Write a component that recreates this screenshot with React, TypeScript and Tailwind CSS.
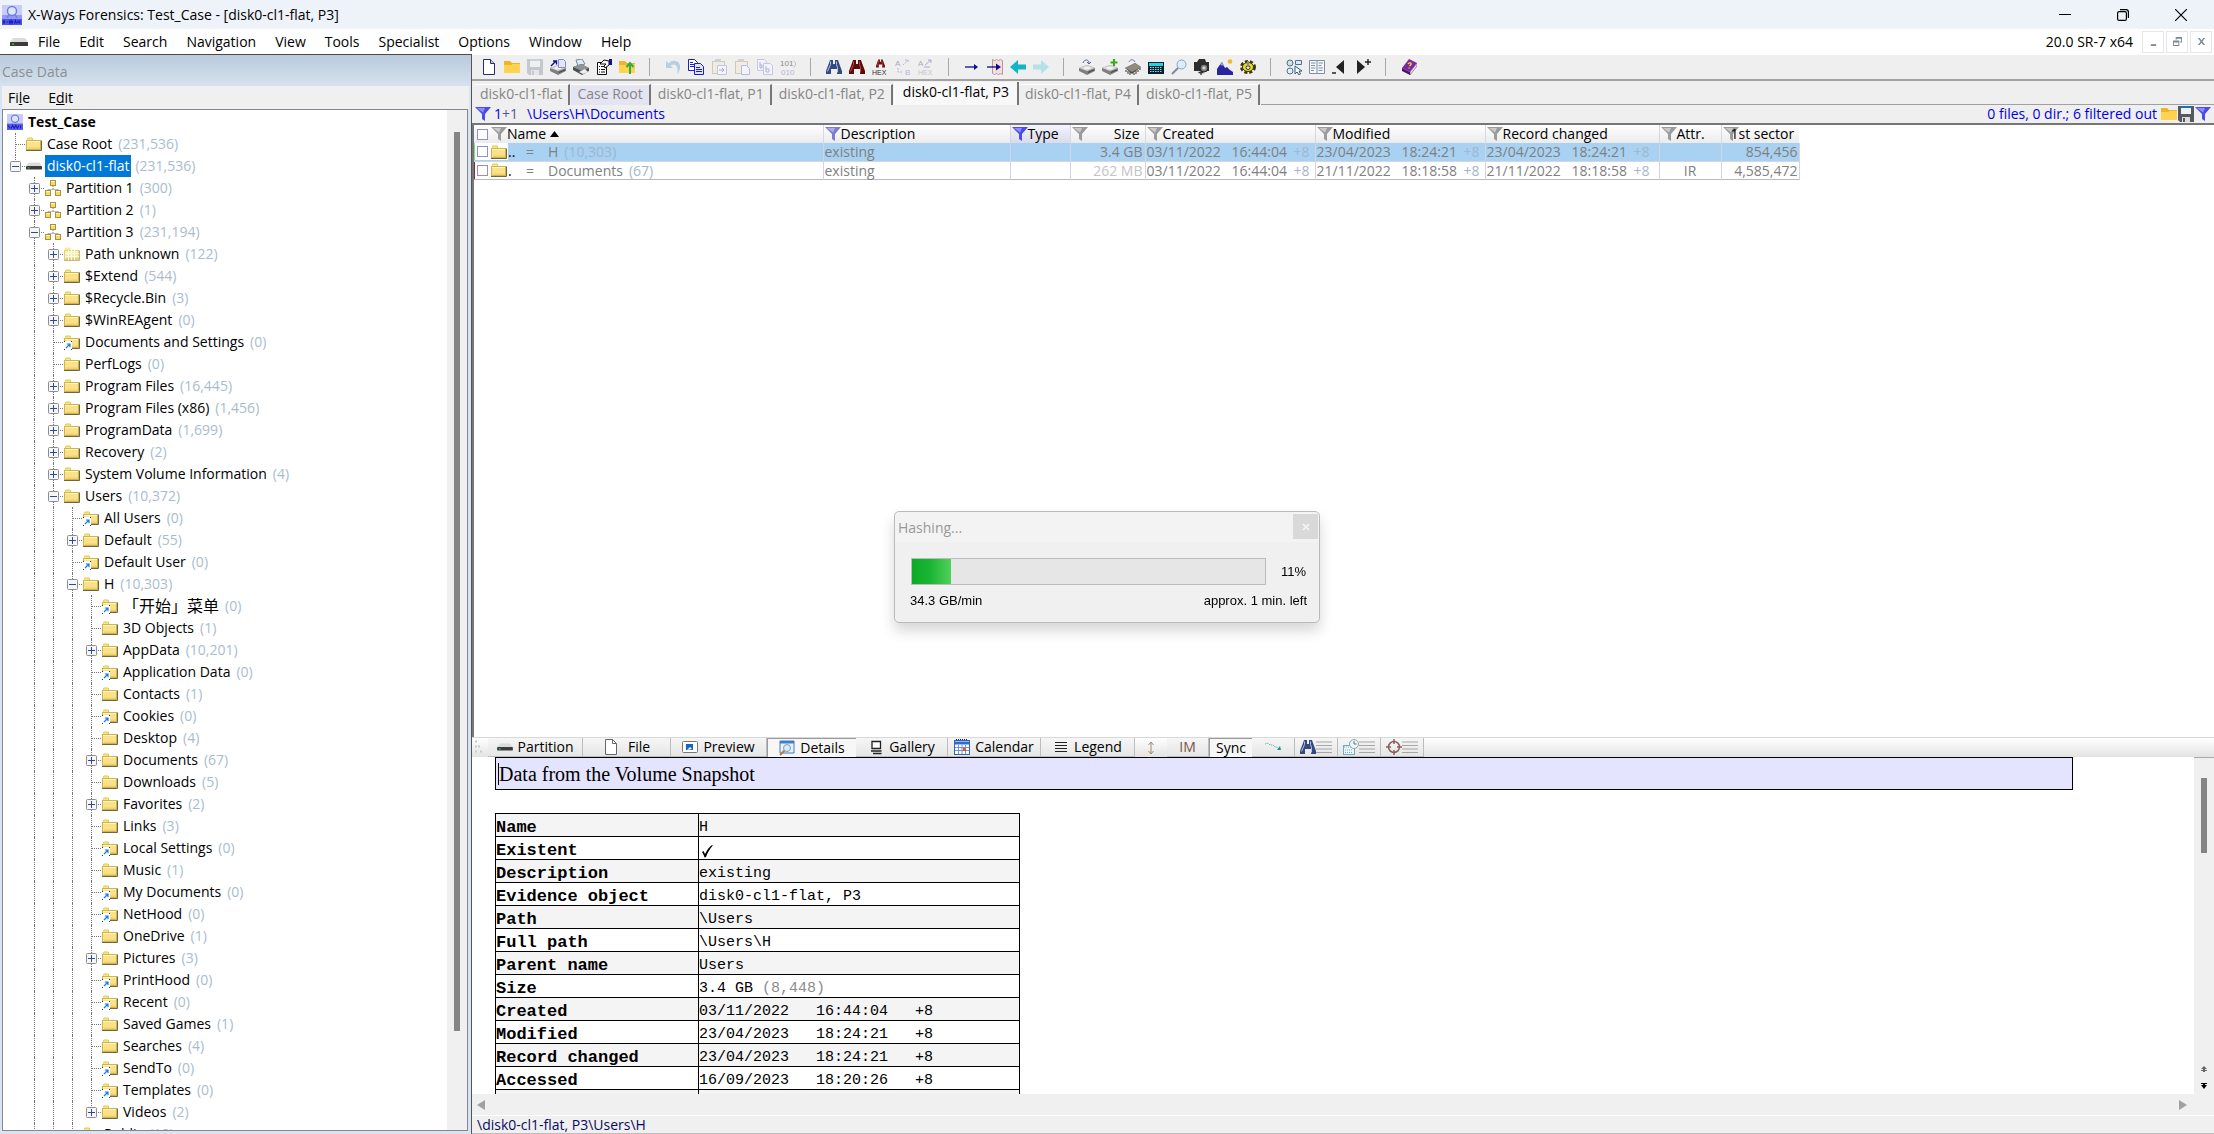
import { type ReactNode } from 'react';

type NodeKind = 'case' | 'folder' | 'link' | 'disk' | 'partition' | 'ghost';

interface TreeNode {
  depth: number;
  label: string;
  count?: string;
  kind: NodeKind;
  toggle?: '+' | '-';
  last?: boolean;
  cjk?: boolean;
}

const TREE: TreeNode[] = [
  { depth: 0, label: 'Test_Case', kind: 'case' },
  { depth: 1, label: 'Case Root', count: '231,536', kind: 'folder' },
  { depth: 1, label: 'disk0-cl1-flat', count: '231,536', kind: 'disk', toggle: '-', last: true },
  { depth: 2, label: 'Partition 1', count: '300', kind: 'partition', toggle: '+' },
  { depth: 2, label: 'Partition 2', count: '1', kind: 'partition', toggle: '+' },
  { depth: 2, label: 'Partition 3', count: '231,194', kind: 'partition', toggle: '-' },
  { depth: 3, label: 'Path unknown', count: '122', kind: 'ghost', toggle: '+' },
  { depth: 3, label: '$Extend', count: '544', kind: 'folder', toggle: '+' },
  { depth: 3, label: '$Recycle.Bin', count: '3', kind: 'folder', toggle: '+' },
  { depth: 3, label: '$WinREAgent', count: '0', kind: 'folder', toggle: '+' },
  { depth: 3, label: 'Documents and Settings', count: '0', kind: 'link' },
  { depth: 3, label: 'PerfLogs', count: '0', kind: 'folder' },
  { depth: 3, label: 'Program Files', count: '16,445', kind: 'folder', toggle: '+' },
  { depth: 3, label: 'Program Files (x86)', count: '1,456', kind: 'folder', toggle: '+' },
  { depth: 3, label: 'ProgramData', count: '1,699', kind: 'folder', toggle: '+' },
  { depth: 3, label: 'Recovery', count: '2', kind: 'folder', toggle: '+' },
  { depth: 3, label: 'System Volume Information', count: '4', kind: 'folder', toggle: '+' },
  { depth: 3, label: 'Users', count: '10,372', kind: 'folder', toggle: '-' },
  { depth: 4, label: 'All Users', count: '0', kind: 'link' },
  { depth: 4, label: 'Default', count: '55', kind: 'folder', toggle: '+' },
  { depth: 4, label: 'Default User', count: '0', kind: 'link' },
  { depth: 4, label: 'H', count: '10,303', kind: 'folder', toggle: '-' },
  { depth: 5, label: '「开始」菜单', count: '0', kind: 'link', cjk: true },
  { depth: 5, label: '3D Objects', count: '1', kind: 'folder' },
  { depth: 5, label: 'AppData', count: '10,201', kind: 'folder', toggle: '+' },
  { depth: 5, label: 'Application Data', count: '0', kind: 'link' },
  { depth: 5, label: 'Contacts', count: '1', kind: 'folder' },
  { depth: 5, label: 'Cookies', count: '0', kind: 'link' },
  { depth: 5, label: 'Desktop', count: '4', kind: 'folder' },
  { depth: 5, label: 'Documents', count: '67', kind: 'folder', toggle: '+' },
  { depth: 5, label: 'Downloads', count: '5', kind: 'folder' },
  { depth: 5, label: 'Favorites', count: '2', kind: 'folder', toggle: '+' },
  { depth: 5, label: 'Links', count: '3', kind: 'folder' },
  { depth: 5, label: 'Local Settings', count: '0', kind: 'link' },
  { depth: 5, label: 'Music', count: '1', kind: 'folder' },
  { depth: 5, label: 'My Documents', count: '0', kind: 'link' },
  { depth: 5, label: 'NetHood', count: '0', kind: 'link' },
  { depth: 5, label: 'OneDrive', count: '1', kind: 'folder' },
  { depth: 5, label: 'Pictures', count: '3', kind: 'folder', toggle: '+' },
  { depth: 5, label: 'PrintHood', count: '0', kind: 'link' },
  { depth: 5, label: 'Recent', count: '0', kind: 'link' },
  { depth: 5, label: 'Saved Games', count: '1', kind: 'folder' },
  { depth: 5, label: 'Searches', count: '4', kind: 'folder' },
  { depth: 5, label: 'SendTo', count: '0', kind: 'link' },
  { depth: 5, label: 'Templates', count: '0', kind: 'link' },
  { depth: 5, label: 'Videos', count: '2', kind: 'folder', toggle: '+', last: true },
  { depth: 4, label: 'Public', count: '18', kind: 'folder' },
];

const MENU = ['File', 'Edit', 'Search', 'Navigation', 'View', 'Tools', 'Specialist', 'Options', 'Window', 'Help'];

const DETAILS: { name: string; value: ReactNode }[] = [
  { name: 'Name', value: 'H' },
  {
    name: 'Existent',
    value: (
      <svg viewBox="0 0 14 14" className="ml-0.5 block size-[14px]" role="img" aria-label="yes">
        <path d="M1 8l1.500-1 1.500 3C6 6 8 3 11 1l.8.400C8.500 5 6.500 9 5 13l-1.500.500C3 11.500 2 9.500 1 8z" fill="#000" />
      </svg>
    ),
  },
  { name: 'Description', value: 'existing' },
  { name: 'Evidence object', value: 'disk0-cl1-flat, P3' },
  { name: 'Path', value: '\\Users' },
  { name: 'Full path', value: '\\Users\\H' },
  { name: 'Parent name', value: 'Users' },
  { name: 'Size', value: <>3.4 GB <span className="text-[#8c8c8c]">(8,448)</span></> },
  { name: 'Created', value: '03/11/2022   16:44:04   +8' },
  { name: 'Modified', value: '23/04/2023   18:24:21   +8' },
  { name: 'Record changed', value: '23/04/2023   18:24:21   +8' },
  { name: 'Accessed', value: '16/09/2023   18:20:26   +8' },
  { name: '', value: '' },
];

function Svg({ children, className = 'size-4' }: { children: ReactNode; className?: string }) {
  return (
    <svg viewBox="0 0 16 16" className={`${className} shrink-0`} aria-hidden="true">
      {children}
    </svg>
  );
}

/* ---------- shared drawings ---------- */

function Logo() {
  return (
    <svg viewBox="0 0 20 20" className="size-5 shrink-0" aria-hidden="true">
      <rect width="20" height="20" fill="#c9cdfb" />
      <rect y="10" width="20" height="4" fill="#9499f5" />
      <rect y="14" width="20" height="6" fill="#5055ee" />
      <circle cx="10" cy="6" r="4.500" fill="#dfe4ff" stroke="#6f7fe0" strokeWidth="1.400" />
      <path d="M7 9.500L5 12.500M13 9.500l2 3" stroke="#6f7fe0" strokeWidth="1.400" />
      <path d="M1 15.500l2 3M3 15.500l-2 3M4.500 17h1.500M7 15.500l1 3 1-3 1 3 1-3M12.500 18.500l1-3 1 3M16 15.500v3M18.500 15.500l-1.500 1.500 1.500 1.500" stroke="#1a1fb0" strokeWidth="1.100" fill="none" />
    </svg>
  );
}

function FolderIcon({ link = false, ghost = false }: { link?: boolean; ghost?: boolean }) {
  return (
    <Svg>
      <path d="M0 4h1V2.500L2 1.500h4l1 1V4h8v10H0z" fill={ghost ? '#f6eeb4' : '#d9c95a'} />
      <path d="M2 2.500h4V4H1z" fill="#fbe97a" />
      <rect x="0.500" y="4.500" width="14" height="9" fill={ghost ? '#f7edab' : '#fbe28a'} stroke={ghost ? '#dccf80' : '#c9b64e'} />
      <path d="M1 5.500h13" stroke="#fff7bd" />
      <path d="M2 11.500h12v1.500H2z" fill="#f4cf74" />
      <path d="M0 14.500h15.500V4.500" stroke={ghost ? '#c5bb80' : '#6f6742'} fill="none" />
      {ghost && <path d="M4.500 4v10M7.500 4v10M10.500 4v10M1 7.500h14M1 10.500h14" stroke="#fffdf0" />}
      {link && (
        <>
          <rect x="0" y="7" width="8" height="9" fill="#fff" />
          <path d="M0 7.500h1M7 7.500h1M0 15.500h1M7 15.500h1" stroke="#333" />
          <path d="M2 14l3.500-3.500M2.800 10H6v3.200" stroke="#1580d8" strokeWidth="1.200" fill="none" />
        </>
      )}
    </Svg>
  );
}

function DiskIcon({ className = 'w-4 h-4' }: { className?: string }) {
  return (
    <svg viewBox="0 0 18 16" className={`${className} shrink-0`} aria-hidden="true">
      <path d="M3 4h12l3 4H0z" fill="#dcdcdc" />
      <rect y="8" width="18" height="4" rx="0.500" fill="#3c3c3c" />
      <rect x="2" y="9.500" width="2" height="1.200" fill="#39d24a" />
    </svg>
  );
}

function PartitionIcon() {
  return (
    <Svg>
      <path d="M8 6v3M3 12V9.500h10V12" stroke="#777" strokeDasharray="1 1" fill="none" />
      {[[5, 0], [0, 10], [10, 10]].map(([x, y]) => (
        <g key={`${x}-${y}`}>
          <rect x={x + 0.5} y={y + 0.5} width="5" height="5" fill="#fbd960" stroke="#a8943a" />
          <path d={`M${x + 1} ${y + 1.5}h4`} stroke="#fff6be" />
        </g>
      ))}
    </Svg>
  );
}

function FilterIcon({ tone = 'gray' }: { tone?: 'gray' | 'blue' | 'lilac' }) {
  const fill = { gray: '#9b9b9b', blue: '#4b4bf2', lilac: '#7d7dd0' }[tone];
  const light = { gray: '#c9c9c9', blue: '#8f8ffb', lilac: '#adade6' }[tone];
  return (
    <Svg>
      <path d="M0 1h16L10 8v7L7 13V8z" fill={fill} />
      <path d="M2 2h8L8 6.500z" fill={light} />
    </Svg>
  );
}

function YellowFolder() {
  return (
    <>
      <path d="M0 3V2h6l2 2h8v10H0z" fill="#f0b429" />
      <path d="M0 6h7l2-1h7v9H0z" fill="#ffd24f" />
    </>
  );
}

function Floppy({ body = '#555a60', cap = '#1571c4' }: { body?: string; cap?: string }) {
  return (
    <>
      <path d="M0 0h16v16H2l-2-2z" fill={body} />
      <rect x="3" y="0" width="10" height="8" fill="#f1f1f1" />
      <rect x="3" y="0" width="10" height="2" fill={cap} />
      <rect x="4" y="11" width="8" height="5" fill="#dcdcdc" />
      <rect x="5" y="12" width="2" height="4" fill={body} />
    </>
  );
}

function Binoculars({ fill, shine }: { fill: string; shine: string }) {
  return (
    <>
      <path d="M4 1h3v4h2V1h3l1 3 3 8v3h-5v-5H5v5H0v-3l3-8z" fill={fill} />
      <path d="M4.500 2.500v3l-3 7M10.500 2.500v3l1 3v5" stroke={shine} fill="none" />
    </>
  );
}

function Drive() {
  return (
    <>
      <path d="M0 9l8-3 8 3v3l-8 4-8-4z" fill="#7f7f7f" />
      <path d="M0 9l8-3 8 3-8 3z" fill="#d4d4d4" />
      <path d="M9 13.500l6-2.700" stroke="#444" />
      <ellipse cx="8" cy="9" rx="3.500" ry="1.300" fill="#f3f3f3" />
    </>
  );
}

/* ---------- main toolbar ---------- */

const TOOLS: ([string, ReactNode] | null)[] = [
  ['New', <><path d="M2.500 0.500h7l4 4v11h-11z" fill="#fff" stroke="#2a2a6c" /><path d="M9.500 0.500v4h4" fill="#c9c9ea" stroke="#2a2a6c" /></>],
  ['Open', <YellowFolder />],
  ['Save', <g opacity="0.500"><Floppy body="#9aa3ab" cap="#a5b6c4" /></g>],
  ['Image disk', <><Drive /><path d="M8.500 0.500h5l2 2v6h-7z" fill="#e4e6ff" stroke="#8a8ad0" /><path d="M1 7l5-5M3 2h3.500v3.500" stroke="#10108a" strokeWidth="1.400" fill="none" /></>],
  ['Print', <><path d="M3 1l6-1 3 5-7 2z" fill="#d7eef5" stroke="#7c8a90" /><path d="M0 8l8-3 8 4v3l-7 4-9-5z" fill="#4b4f52" /><path d="M0 8l8-3 8 4-7 3z" fill="#8e9498" /><path d="M6 13l6-3 3 3-5 2z" fill="#eee" /></>],
  ['Properties', <><path d="M1.500 3.500h9v12h-9z" fill="#fff" stroke="#111" /><path d="M3 7.500h1M5 7.500h4M3 10.500h1M5 10.500h4M3 13h1M5 13h4" stroke="#111" /><path d="M4 5l4-4 5 1v4l-4 3-1-2 2-2z" fill="#fff" stroke="#111" /><path d="M13 0h3v6h-3z" fill="#10108a" /></>],
  ['Up', <><YellowFolder /><path d="M11 15V5M7.500 8L11 4l3.500 4" stroke="#2fae46" strokeWidth="2" fill="none" /></>],
  null,
  ['Undo', <path d="M1 2v7h7L5.500 6.500c4-2.500 7 0 7 4.500v4c4-5 3.500-12-2-13-3-.500-5 .500-6.500 2.500z" fill="#b9cfe0" />],
  ['Copy', <><path d="M0.500 0.500h6l3 3v8h-9z" fill="#fff" stroke="#1c1cd0" /><path d="M2 3.500h3M2 5.500h5M2 7.500h4" stroke="#1c1cd0" /><path d="M6.500 4.500h6l3 3v8h-9z" fill="#dfe2ff" stroke="#1c1cd0" /><path d="M8 8.500h4M8 10.500h6M8 12.500h6" stroke="#1c1cd0" /></>],
  ['Paste', <><rect x="1.500" y="2.500" width="12" height="12" fill="#f1ebe2" stroke="#cfc8bd" /><rect x="4" y="0" width="6" height="3" fill="#cfcfda" /><path d="M6.500 6.500h9v9h-9z" fill="#f4f4ff" stroke="#c3c3da" /><path d="M8 11h5M11 9l2 2-2 2" stroke="#a9a9ba" fill="none" /></>],
  ['Paste new', <><rect x="1.500" y="2.500" width="12" height="12" fill="#f1ebe2" stroke="#cfc8bd" /><rect x="4" y="0" width="6" height="3" fill="#cfcfda" /><path d="M7.500 6.500h5l3 3v6h-8z" fill="#f4f4ff" stroke="#b8b8e4" /></>],
  ['Write block', <><path d="M0.500 0.500h7l2 2v9h-9z" fill="#f3f3ff" stroke="#c6c6e2" /><path d="M6.500 4.500h7l2 2v9h-9z" fill="#f3f3ff" stroke="#c6c6e2" /><path d="M3 3v6M3 6h2v3H3M9 7v6M9 10h3v3H9" stroke="#b2b2cf" fill="none" /></>],
  ['Convert', <><text x="0" y="7" fontSize="8" fill="#8c8c8c" fontFamily="Liberation Sans">101</text><text x="1" y="16" fontSize="8" fill="#b4b4d2" fontFamily="Liberation Sans">010</text><path d="M13.500 2c3 1 2.500 5 0 6.500" stroke="#c0c0c0" fill="none" /></>],
  null,
  ['Find text', <Binoculars fill="#36497e" shine="#b4c2ee" />],
  ['Find hex', <Binoculars fill="#5b0b0b" shine="#b94a4a" />],
  ['Find hex values', <><g transform="translate(4 0) scale(.560)"><Binoculars fill="#6d0f0f" shine="#c55" /></g><text x="0" y="16" fontSize="7" fill="#333" fontFamily="Liberation Sans">HEX</text></>],
  ['Replace text', <g opacity="0.600"><text x="0" y="7" fontSize="8" fill="#7b7b95" fontFamily="Liberation Sans">A</text><text x="10" y="16" fontSize="8" fill="#9090d0" fontFamily="Liberation Sans">B</text><path d="M8 6l5-5M10 1h3v3M3 9v4h5" stroke="#8d8dbb" strokeDasharray="2 1" fill="none" /></g>],
  ['Replace hex', <g opacity="0.600"><text x="0" y="7" fontSize="8" fill="#7b7b95" fontFamily="Liberation Sans">A</text><text x="0" y="16" fontSize="7" fill="#aaa" fontFamily="Liberation Sans">HEX</text><path d="M7 6l6-5M10 1h3v3M6 8h6" stroke="#7d7dbb" fill="none" /></g>],
  null,
  ['Go to offset', <><path d="M1 8h10" stroke="#0c0c92" strokeWidth="1.300" /><path d="M10 5l4 3-4 3z" fill="#0c0c92" /></>],
  ['Go to page', <><path d="M5.500 0.500l2 1 2-1 2 1 2-1 2 1v14l-2-1-2 1-2-1-2 1-2-1z" fill="#f7dede" stroke="#b49a9a" /><path d="M0 8h10" stroke="#0c0c92" strokeWidth="1.300" /><path d="M9 4.500l5 3.500-5 3.500z" fill="#0c0c92" /></>],
  ['Back', <path d="M0 8l8-7v4.500h8v5H8V15z" fill="#13b5c4" />],
  ['Forward', <path d="M16 8L8 1v4.500H0v5h8V15z" fill="#b3e2e6" />],
  null,
  ['Open disk', <><Drive /><path d="M4 4c1-4 6-4 6 0M8 3l2 2 2-2" stroke="#53649c" fill="none" /></>],
  ['Add disk', <><Drive /><path d="M12 0v7M8.500 3.500h7" stroke="#3bab1e" strokeWidth="2.200" /></>],
  ['Open RAM', <><path d="M0 9l10-5 6 4-9 7z" fill="#4e4a45" /><path d="M0 9l10-5 6 4-9 5z" fill="#918a80" /><path d="M1 11v2M3 12v3M5 13v3M9 14v2M11 12v3M13 11v2M15 9v2" stroke="#333" /><path d="M4 3c1-3 5-3 6 0" stroke="#6c7cae" fill="none" /></>],
  ['Calculator', <><rect x="0" y="3" width="16" height="12" fill="#0d1f2c" /><rect x="1" y="4" width="14" height="3" fill="#25d3e2" /><path d="M2 8.500h12M2 10.500h12M2 12.500h12" stroke="#7fe2ea" strokeDasharray="1.500 1" /></>],
  ['Viewer', <><circle cx="10.500" cy="5.500" r="4.500" fill="#d8eefb" stroke="#8aa3bd" /><path d="M7 9l-6 6" stroke="#7a8ba0" strokeWidth="2" /></>],
  ['Snapshot', <><path d="M0 3h3l2-3h6l1 3h3v9H0z" fill="#2e2e2e" /><circle cx="10" cy="9" r="4" fill="#777" stroke="#222" /><circle cx="10" cy="9" r="1.800" fill="#ccc" /><path d="M7 11v5M4.500 13.500h5" stroke="#333" strokeWidth="1.300" /></>],
  ['Gallery', <><path d="M0 16V10l2-3 3-4 3 6 2-1 3 3 3 2v3z" fill="#2626a0" /><path d="M3 6l2-3 2 4z" fill="#8f9af0" /><circle cx="13" cy="2.500" r="2.300" fill="#f4b52b" /></>],
  ['Options', <><ellipse cx="8" cy="8" rx="6" ry="5" fill="none" stroke="#3c380a" strokeWidth="4" strokeDasharray="2.800 1.700" /><ellipse cx="8" cy="8" rx="5.500" ry="4.500" fill="#e6dd33" stroke="#3c380a" /><circle cx="8" cy="8.500" r="2" fill="#efefef" stroke="#3c380a" /><path d="M8 2v6" stroke="#8c8c8c" strokeWidth="2" /></>],
  null,
  ['Select', <><circle cx="4" cy="4" r="3" fill="#cfe6cf" stroke="#4d6e96" /><circle cx="4" cy="12" r="3" fill="#e5eefa" stroke="#4d6e96" /><path d="M9.500 1.500h6v4h-6z" fill="#dde8f4" stroke="#4d6e96" /><path d="M9 7v8l2-2 2 3 1.500-1L13 12h3z" fill="#fff" stroke="#33598c" /></>],
  ['Columns', <><path d="M0.500 1.500h15v13H.5z" fill="#f6f8fb" stroke="#7f8ea3" /><path d="M8 1v14M2 4h4.500M2 6.500h4M2 9h4.500M2 11.500h3M9.500 4H14M9.500 6.500h3M9.500 9H14M9.500 11.500h4" stroke="#7b90ad" /></>],
  ['Previous', <><path d="M12 1v14L4 8z" fill="#222" /><path d="M0 14h4" stroke="#222" strokeWidth="1.500" /></>],
  ['Next', <><path d="M2 1v14l8-7z" fill="#222" /><path d="M10 3h6M13 0v6" stroke="#222" strokeWidth="1.400" /></>],
  null,
  ['Help', <><path d="M1 9L8 0l8 4-7 9z" fill="#7b2a9c" /><path d="M1 9l8 4v3L1 12z" fill="#4c1266" /><path d="M9 13l7-9v3l-7 9z" fill="#efe6f4" stroke="#5e1b7c" strokeWidth="0.500" /><path d="M7 5c1-2 4-1 3 .500L8.500 7M8 8.500v1" stroke="#ffd83d" strokeWidth="1.300" fill="none" /></>],
];

function Toolbar() {
  return (
    <div className="flex h-[27px] shrink-0 items-center border-t border-b-2 border-t-white border-b-[#a3a3a3] bg-[#efefef] pl-[5px]">
      {TOOLS.map((tool, i) =>
        tool ? (
          <button key={tool[0]} aria-label={tool[0]} className="flex w-[23px] justify-center">
            <Svg>{tool[1]}</Svg>
          </button>
        ) : (
          <span key={i} className="flex w-[23px] justify-center">
            <span className="h-[18px] w-px bg-[#a8a8a8]" />
          </span>
        ),
      )}
    </div>
  );
}

/* ---------- case tree ---------- */

function NodeIcon({ kind }: { kind: NodeKind }) {
  if (kind === 'disk') return <DiskIcon />;
  if (kind === 'partition') return <PartitionIcon />;
  return <FolderIcon link={kind === 'link'} ghost={kind === 'ghost'} />;
}

function Pivot({ toggle, last }: { toggle?: '+' | '-'; last?: boolean }) {
  return (
    <span className="relative flex w-[19px] shrink-0 items-center justify-center self-stretch">
      <span className={`absolute top-0 left-[9px] border-l border-dotted border-[#777] ${last ? 'h-1/2' : 'h-full'}`} />
      <span className="absolute right-0 left-[9px] border-t border-dotted border-[#777]" />
      {toggle && (
        <button aria-label={toggle === '+' ? 'Expand' : 'Collapse'} className="relative">
          <svg viewBox="0 0 11 11" className="size-[11px]" aria-hidden="true">
            <rect x="0.500" y="0.500" width="10" height="10" rx="1" fill="#f6f6f6" stroke="#8d8d8d" />
            <path d="M2 5.500h7" stroke="#2c4a9c" />
            {toggle === '+' && <path d="M5.500 2v7" stroke="#2c4a9c" />}
          </svg>
        </button>
      )}
    </span>
  );
}

function TreeRow({ node }: { node: TreeNode }) {
  if (node.kind === 'case') {
    return (
      <li className="flex h-[22px] items-center gap-[5px] pl-px font-bold">
        <Svg>
          <g transform="scale(.800)">
            <rect width="20" height="20" fill="#c9cdfb" />
            <rect y="12" width="20" height="8" fill="#5a5ff0" />
            <circle cx="10" cy="6" r="4.500" fill="#dfe4ff" stroke="#6f7fe0" strokeWidth="1.500" />
            <path d="M1 14l3 4M5 18l2-4 2 4 2-4 2 4 2-4M17 14v4" stroke="#1a1fb0" strokeWidth="1.300" fill="none" />
          </g>
        </Svg>
        {node.label}
      </li>
    );
  }
  const selected = node.kind === 'disk';
  return (
    <li className="flex h-[22px] items-center whitespace-nowrap">
      {Array.from({ length: node.depth - 1 }).map((_, i) => (
        <span key={i} className="flex w-[19px] shrink-0 justify-start self-stretch pl-[9px]">
          {i > 0 && <span className="border-l border-dotted border-[#777]" />}
        </span>
      ))}
      <Pivot toggle={node.toggle} last={node.last} />
      <span className="mr-[3px] ml-px flex">
        <NodeIcon kind={node.kind} />
      </span>
      {selected ? (
        <span className="bg-[#0078d7] px-0.5 leading-[22px] text-white">{node.label}</span>
      ) : (
        <span className={node.cjk ? 'px-0.5 text-[16px] leading-5' : 'px-0.5'}>{node.label}</span>
      )}
      <span className="pl-1 text-[#a9bccf]">({node.count})</span>
    </li>
  );
}

function CasePanel() {
  return (
    <aside className="flex w-[472px] shrink-0 flex-col border-t border-r border-t-[#4a4a4a] border-r-[#555] bg-[#d8e4f0]">
      <div className="flex h-[31px] shrink-0 items-center bg-gradient-to-b from-[#b9cadb] to-[#d5e2ef] pt-0.5 pl-0.5 text-[#8a8f96]">
        Case Data
      </div>
      <div className="mr-0.5 ml-0.5 flex h-[23px] shrink-0 items-center gap-[18px] bg-[#f0f0f0] pl-[6px]">
        <button>Fi<u>l</u>e</button>
        <button>E<u>d</u>it</button>
      </div>
      <div className="mr-[3px] mb-[3px] ml-0.5 flex min-h-0 flex-1 border border-[#828790] bg-white">
        <ul className="min-w-0 flex-1 overflow-hidden pt-px pl-[3px]">
          {TREE.map((node, i) => (
            <TreeRow key={i} node={node} />
          ))}
        </ul>
        <div className="flex w-[20px] shrink-0 justify-center bg-[#f0f0f0] pt-[22px] pb-[99px]">
          <div className="w-[6px] bg-[#858585]" />
        </div>
      </div>
    </aside>
  );
}

/* ---------- directory browser ---------- */

const TABS = [
  { label: 'disk0-cl1-flat' },
  { label: 'Case Root', tint: true },
  { label: 'disk0-cl1-flat, P1' },
  { label: 'disk0-cl1-flat, P2' },
  { label: 'disk0-cl1-flat, P3', active: true },
  { label: 'disk0-cl1-flat, P4' },
  { label: 'disk0-cl1-flat, P5' },
];

function Tabs() {
  return (
    <div className="flex h-[24px] shrink-0 items-end bg-[#efefef] pl-[2px]">
      {TABS.map((tab) => (
        <button
          key={tab.label}
          className={
            tab.active
              ? 'h-[23px] border-r-2 border-l border-l-white border-r-[#777] bg-[#f8f8f8] px-2 pb-1 leading-[18px] text-black'
              : tab.tint
                ? 'mr-px h-[21px] border-t border-r-2 border-t-white border-r-[#777] bg-[#e4e4f3] px-1.5 pb-0.5 leading-[18px] text-[#858585]'
                : 'mr-px h-[21px] border-t border-r-2 border-t-white border-r-[#777] px-1.5 pb-0.5 leading-[18px] text-[#858585]'
          }
        >
          {tab.label}
        </button>
      ))}
      <div className="flex-1 border-b border-[#a0a0a0]" />
    </div>
  );
}

const COLUMNS: { label: string; width: string; tone?: 'gray' | 'blue' | 'lilac' }[] = [
  { label: 'Description', width: 'w-[187px]', tone: 'lilac' },
  { label: 'Type', width: 'w-[60px]', tone: 'blue' },
  { label: 'Size', width: 'w-[75px]' },
  { label: 'Created', width: 'w-[170px]' },
  { label: 'Modified', width: 'w-[170px]' },
  { label: 'Record changed', width: 'w-[174px]' },
  { label: 'Attr.', width: 'w-[62px]' },
  { label: '1st sector', width: 'w-[78px]' },
];

interface Entry {
  dots: string;
  name: string;
  count: string;
  size: string;
  dates: [string, string][];
  attr: string;
  sector: string;
  selected: boolean;
}

const ENTRIES: Entry[] = [
  {
    dots: '..', name: 'H', count: '10,303', size: '3.4 GB', attr: '', sector: '854,456', selected: true,
    dates: [['03/11/2022', '16:44:04'], ['23/04/2023', '18:24:21'], ['23/04/2023', '18:24:21']],
  },
  {
    dots: '.', name: 'Documents', count: '67', size: '262 MB', attr: 'IR', sector: '4,585,472', selected: false,
    dates: [['03/11/2022', '16:44:04'], ['21/11/2022', '18:18:58'], ['21/11/2022', '18:18:58']],
  },
];

const CHECK = 'size-[11px] shrink-0 appearance-none border border-[#8f8fd6] bg-white';

function Browser() {
  return (
    <table className="w-[1325px] table-fixed border-collapse text-[#808080]">
      <colgroup>
        <col className="w-[349px]" />
        {COLUMNS.map((c) => (
          <col key={c.label} className={c.width} />
        ))}
      </colgroup>
      <thead>
        <tr className="h-[18px] bg-gradient-to-b from-white to-[#ebebeb] text-left text-black">
          <th className="p-0 font-normal">
            <div className="flex h-[18px] items-center pl-[3px]">
              <input type="checkbox" aria-label="Tag all" className={CHECK} />
              <span className="ml-[3px] flex"><FilterIcon /></span>
              <button className="flex items-center gap-1 leading-[18px]">
                Name
                <svg viewBox="0 0 9 6" className="h-[6px] w-[9px]" aria-hidden="true"><path d="M4.500 0L9 6H0z" /></svg>
              </button>
            </div>
          </th>
          {COLUMNS.map((c) => (
            <th
              key={c.label}
              className={
                c.label === 'Type'
                  ? 'border-l border-[#d3d3e4] bg-gradient-to-b from-[#f4f4ff] to-[#dadaea] p-0 font-normal'
                  : 'border-l border-[#d8d8e4] p-0 font-normal'
              }
            >
              <div className={c.label === 'Size' ? 'flex h-[18px] items-center justify-between pr-[5px] pl-px' : 'flex h-[18px] items-center pl-px'}>
                <FilterIcon tone={c.tone} />
                <button className={c.label === '1st sector' ? '-ml-2 leading-[18px] whitespace-nowrap' : 'leading-[18px] whitespace-nowrap'}>{c.label}</button>
              </div>
            </th>
          ))}
        </tr>
      </thead>
      <tbody>
        {ENTRIES.map((e) => (
          <tr
            key={e.name}
            className={
              e.selected
                ? 'h-[18px] border-b border-[#cdd8ec] bg-[#a9d1f1]'
                : 'h-[18px] border-b border-[#b9b9c9] bg-white'
            }
          >
            <td className="p-0">
              <div className="flex h-[17px] items-center leading-[17px]">
                <span className={e.selected ? 'flex h-[17px] items-center gap-[3px] border-l border-[#7de07d] bg-white pr-px pl-0.5' : 'flex h-[17px] items-center gap-[3px] border-l border-[#803030] bg-white pr-px pl-0.5'}>
                  <input type="checkbox" aria-label={`Tag ${e.name}`} className={CHECK} />
                  <FolderIcon />
                </span>
                <span className="w-[18px] text-black">{e.dots}</span>
                <span className="w-[22px]">=</span>
                <span>{e.name}</span>
                <span className="pl-[6px] text-[#9fb7d0]">({e.count})</span>
              </div>
            </td>
            <td className="border-l border-[#d3d3e8] p-0 pl-px leading-[17px]">existing</td>
            <td className="border-l border-[#d3d3e8] p-0" />
            <td className={e.selected ? 'border-l border-[#d3d3e8] p-0 pr-0.5 text-right leading-[17px]' : 'border-l border-[#d3d3e8] p-0 pr-0.5 text-right leading-[17px] text-[#c4c4c4]'}>
              {e.size}
            </td>
            {e.dates.map(([date, time], i) => (
              <td key={i} className="border-l border-[#d3d3e8] p-0 pl-px">
                <div className="flex leading-[17px] whitespace-nowrap">
                  <span className="w-[85px]">{date}</span>
                  <span className="w-[62px]">{time}</span>
                  <span className="text-[#a3b6d2]">+8</span>
                </div>
              </td>
            ))}
            <td className="border-l border-[#d3d3e8] p-0 text-center leading-[17px]">{e.attr}</td>
            <td className="border-r border-l border-[#d3d3e8] p-0 pr-px text-right leading-[17px]">{e.sector}</td>
          </tr>
        ))}
      </tbody>
    </table>
  );
}

/* ---------- lower pane ---------- */

const Lines = <path d="M0 3h16M0 6.500h16M0 10h16M0 13.500h16" stroke="#a5a5a5" />;

const VIEWS: { label: string; width: string; icon: ReactNode; active?: boolean }[] = [
  { label: 'Partition', width: 'w-[95px]', icon: <DiskIcon className="h-[14px] w-4" /> },
  { label: 'File', width: 'w-[88px]', icon: <Svg className="mr-1 size-4"><path d="M2.500 0.500h7l4 4v11h-11z" fill="#fff" stroke="#666" /><path d="M9.500 0.500v4h4" fill="none" stroke="#666" /></Svg> },
  { label: 'Preview', width: 'w-[96px]', icon: <Svg><rect x="0.500" y="2.500" width="15" height="11" rx="1" fill="#fff" stroke="#777" /><rect x="4" y="5" width="7" height="6" fill="#1565c0" /><path d="M5 11l3-3 2 2z" fill="#fff" /></Svg> },
  { label: 'Details', width: 'w-[89px]', active: true, icon: <Svg><path d="M1 1h14v12H1z" fill="#eaf3fc" stroke="#3f7ec4" /><path d="M1 1h14v2.500H1z" fill="#3f7ec4" /><circle cx="8" cy="8" r="3.500" fill="#d4ecfb" stroke="#8b99a8" /><path d="M5.500 10.500L1 15" stroke="#b07f49" strokeWidth="2" /></Svg> },
  { label: 'Gallery', width: 'w-[92px]', icon: <Svg><path d="M4 2.500h8.500v7H4z" fill="#fff" stroke="#222" strokeWidth="1.300" /><path d="M3 12h10.500M5 14.500h8.500" stroke="#222" strokeWidth="1.300" /></Svg> },
  { label: 'Calendar', width: 'w-[93px]', icon: <Svg><rect x="0.500" y="1.500" width="15" height="14" fill="#fff" stroke="#3461b8" /><path d="M1 4h14" stroke="#2f6bd8" strokeWidth="3" /><path d="M1 8.500h14M1 11.500h14M4.500 6v9M8 6v9M11.500 6v9" stroke="#6f93d4" /><path d="M2 0.500h12" stroke="#222" strokeDasharray="1 1" /><rect x="9" y="9" width="3" height="3" fill="#e2542c" /></Svg> },
  { label: 'Legend', width: 'w-[94px]', icon: <Svg><path d="M2 3.500h12M2 6.500h12M2 9.500h12M2 12.500h12" stroke="#222" /></Svg> },
];

const RAISED = 'border-r border-b border-[#bdbdbd] bg-gradient-to-b from-[#f6f6f6] to-[#e6e6e6]';
const PRESSED = 'border-t border-l border-[#9a9a9a] bg-[#f7f7f7]';

function ViewBar() {
  return (
    <div className="flex h-[20px] shrink-0 border-t border-[#d9d9d9] bg-gradient-to-b from-white to-[#e3e3e3] leading-[18px]">
      <svg viewBox="0 0 16 19" className="w-4 shrink-0" aria-hidden="true">
        <path d="M3 3.500h2M6 8.500h2M3 8.500h2M3 13.500h2M8 13.500h2" stroke="#c9c9c9" strokeWidth="2" />
      </svg>
      {VIEWS.map((v) => (
        <button key={v.label} className={`flex items-center justify-center gap-[5px] ${v.width} ${v.active ? PRESSED : RAISED}`}>
          {v.icon}
          {v.label}
        </button>
      ))}
      <button aria-label="Resize" className="flex w-[32px] items-center justify-center">
        <Svg><path d="M8 2v12M5.500 5L8 2l2.500 3M5.500 11L8 14l2.500-3" stroke="#a08a6c" fill="none" /></Svg>
      </button>
      <button className={`w-[42px] text-[#7a5248] ${RAISED}`}>IM</button>
      <button className={`w-[43px] text-black ${PRESSED}`}>Sync</button>
      <button aria-label="Follow" className={`flex w-[43px] items-center justify-center ${RAISED}`}>
        <Svg><path d="M0 5l3-1 2 2 3 0 2 2 2 0 2 2" stroke="#5fb8b8" strokeDasharray="1.500 .700" fill="none" /><path d="M16 11h-4l3-4z" fill="#199393" /></Svg>
      </button>
      <button aria-label="Search hits" className={`flex w-[43px] items-center justify-center ${RAISED}`}>
        <Svg><Binoculars fill="#36497e" shine="#b4c2ee" /></Svg><Svg>{Lines}</Svg>
      </button>
      <button aria-label="Events" className={`flex w-[43px] items-center justify-center ${RAISED}`}>
        <Svg><rect x="0.500" y="6.500" width="11" height="9" fill="#eaf6fa" stroke="#7aa9b8" /><path d="M1 8h10M2 11h8M2 13.500h8" stroke="#6fb1c4" strokeDasharray="1 1" /><circle cx="11" cy="5" r="4.500" fill="#f1f6f8" stroke="#8ba3ab" /><path d="M11 2v3h2.500" stroke="#56707a" fill="none" /></Svg>
        <Svg>{Lines}</Svg>
      </button>
      <button aria-label="Positions" className={`flex w-[43px] items-center justify-center ${RAISED}`}>
        <Svg><circle cx="8" cy="8" r="5.500" fill="none" stroke="#8a5f5f" strokeWidth="1.500" /><path d="M8 0v5M8 11v5M0 8h5M11 8h5" stroke="#8a5f5f" strokeWidth="1.500" /></Svg>
        <Svg>{Lines}</Svg>
      </button>
    </div>
  );
}

function DetailsPane() {
  return (
    <section className="flex h-[397px] shrink-0 flex-col">
      <ViewBar />
      <div className="flex min-h-0 flex-1 border-t border-[#a9a9a9]">
        <div className="-mt-px min-w-0 flex-1 overflow-hidden bg-white pr-[121px] pl-[23px]">
          <h2 className="h-[33px] border border-black bg-[#e4e4ff] pl-0.5 font-['Liberation_Serif',serif] text-[20px] leading-[32px] text-black">
            <span className="border-l border-black">Data from the Volume Snapshot</span>
          </h2>
          <table className="mt-[23px] w-[525px] table-fixed border-collapse font-['Liberation_Mono',monospace] text-[15px] text-black">
            <tbody>
              {DETAILS.map((d, i) => (
                <tr key={d.name} className={i % 2 === 0 ? 'h-[23px] bg-[#f4f4f4]' : 'h-[23px]'}>
                  <th className="w-[203px] border border-black p-0 pt-1.5 text-left text-[17px] leading-4">{d.name}</th>
                  <td className="border border-black p-0 pt-1.5 leading-4 whitespace-pre">{d.value}</td>
                </tr>
              ))}
            </tbody>
          </table>
        </div>
        <div className="flex w-[20px] shrink-0 flex-col items-center bg-[#f0f0f0] pt-[20px] pb-1">
          <div className="h-[75px] w-[6px] bg-[#858585]" />
          <svg viewBox="0 0 8 24" className="mt-auto h-[24px] w-2" aria-hidden="true">
            <path d="M4 0l3 3H5v1h2v1H1V4h2V3H1zM3 5h2v1H3z" fill="#666" />
            <path d="M1 17h6v1H5v1h2l-3 4-3-4h2v-1H1z" fill="#000" />
          </svg>
        </div>
      </div>
      <div className="flex h-[21px] shrink-0 items-center justify-between bg-[#f0f0f0] pr-[27px] pl-[5px]">
        <svg viewBox="0 0 8 10" className="h-[10px] w-2" aria-hidden="true"><path d="M8 0v10L0 5z" fill="#a0a0a0" /></svg>
        <svg viewBox="0 0 8 10" className="h-[10px] w-2" aria-hidden="true"><path d="M0 0v10l8-5z" fill="#a0a0a0" /></svg>
      </div>
      <footer className="h-[19px] shrink-0 border-t border-b border-t-white border-b-[#bdbdbd] bg-[#f0f0f0] pl-[5px] leading-[17px] text-[#0a0a5e]">
        \disk0-cl1-flat, P3\Users\H
      </footer>
    </section>
  );
}

/* ---------- progress window ---------- */

function HashingDialog() {
  return (
    <div
      role="dialog"
      aria-labelledby="hashing-title"
      className="fixed top-1/2 left-1/2 h-[112px] w-[426px] -translate-x-1/2 -translate-y-1/2 rounded-[5px] border border-[#bababa] bg-[#f0f0f0] font-['Liberation_Sans',sans-serif] text-[13px] text-black shadow-[0_8px_14px_rgba(0,0,0,0.16)]"
    >
      <div className="flex h-[30px] items-start justify-between rounded-t-[5px] bg-[#f3f3f3] pt-0.5 pr-px pl-[3px]">
        <span id="hashing-title" className="font-['Open_Sans',sans-serif] text-[14px] leading-[27px] text-[#999]">Hashing...</span>
        <button aria-label="Close" className="flex size-[25px] items-center justify-center bg-[#d9d9d9]">
          <svg viewBox="0 0 8 8" className="size-2" aria-hidden="true"><path d="M1 1l6 6M7 1L1 7" stroke="#f6f6f6" strokeWidth="1.500" /></svg>
        </button>
      </div>
      <div className="flex items-center justify-between pt-4 pr-[13px] pl-4">
        <div className="h-[27px] w-[355px] border border-[#bcbcbc] bg-[#e6e6e6]">
          <div className="h-full w-[11%] bg-gradient-to-r from-[#0aab24] via-[#1cb636] to-[#4fd15a]" />
        </div>
        <span>11%</span>
      </div>
      <div className="flex justify-between pt-[6px] pr-3 pl-[15px] leading-5">
        <span>34.3 GB/min</span>
        <span>approx. 1 min. left</span>
      </div>
    </div>
  );
}

function App() {
  return (
    <div className="flex h-screen w-full flex-col overflow-hidden bg-white font-['Open_Sans','Noto_Sans_CJK_SC',sans-serif] text-[14px] leading-5 text-black">
      <header className="flex h-[29px] shrink-0 items-center justify-between bg-[#eef3fa] pl-0.5">
        <div className="flex items-center gap-[6px]">
          <Logo />
          <h1>X-Ways Forensics: Test_Case - [disk0-cl1-flat, P3]</h1>
        </div>
        <div className="flex h-full pr-1">
          <button aria-label="Minimize" className="flex w-[58px] items-center justify-center">
            <svg viewBox="0 0 12 12" className="size-3" aria-hidden="true"><path d="M0 5.500h12" stroke="#000" /></svg>
          </button>
          <button aria-label="Restore" className="flex w-[58px] items-center justify-center">
            <svg viewBox="0 0 12 12" className="size-3" aria-hidden="true"><rect x="0.600" y="2.600" width="8.800" height="8.800" rx="1.500" fill="none" stroke="#000" strokeWidth="1.200" /><path d="M3 .600h6q2.400 0 2.400 2.400v6" fill="none" stroke="#000" strokeWidth="1.200" /></svg>
          </button>
          <button aria-label="Close window" className="flex w-[58px] items-center justify-center">
            <svg viewBox="0 0 12 12" className="size-3" aria-hidden="true"><path d="M0 0l12 12M12 0L0 12" stroke="#000" strokeWidth="1.200" /></svg>
          </button>
        </div>
      </header>

      <nav className="flex h-[25px] shrink-0 items-center bg-white pl-[10px]">
        <DiskIcon className="mr-[10px] h-4 w-[18px]" />
        <div className="flex gap-[19px]">
          {MENU.map((item) => (
            <button key={item}>{item}</button>
          ))}
        </div>
        <span className="mr-[9px] ml-auto">20.0 SR-7 x64</span>
        <div className="flex gap-0.5 pr-0.5">
          {['M2 8h6v2H2z', 'M3 0h7v6H8V5h1V2H4v1H3zM0 4h7v6H0zm1 2v3h5V6z', 'M1 1h2l2 3 2-3h2L6 5l3 4H7L5 6.500 3 9H1l3-4z'].map((d, i) => (
            <button key={i} aria-label={['Minimize child', 'Restore child', 'Close child'][i]} className="flex h-[22px] w-[22px] items-center justify-center border border-[#e6e6e6]">
              <svg viewBox="0 0 10 10" className="h-[9px] w-[9px]" aria-hidden="true"><path d={d} fill="#7a8794" fillRule="evenodd" /></svg>
            </button>
          ))}
        </div>
      </nav>

      <div className="flex min-h-0 flex-1">
        <CasePanel />
        <main className="flex min-w-0 flex-1 flex-col">
          <Toolbar />
          <Tabs />
          <div className="flex h-[20px] shrink-0 items-center border-b-2 border-[#777] bg-[#efefef] pl-[3px] leading-[18px] text-[#0000e6]">
            <FilterIcon tone="blue" />
            <span className="pl-[3px]">1<span className="text-[#55559c]">+1</span></span>
            <a href="#path" className="pl-[9px]">\Users\H\Documents</a>
            <span className="ml-auto">0 files, 0 dir.; 6 filtered out</span>
            <div className="flex gap-px pr-[3px] pl-1">
              <Svg><YellowFolder /></Svg>
              <Svg><Floppy /></Svg>
              <FilterIcon tone="blue" />
            </div>
          </div>
          <div className="min-h-0 flex-1 overflow-hidden border-l-2 border-[#777] bg-white">
            <Browser />
          </div>
          <DetailsPane />
        </main>
      </div>

      <HashingDialog />
    </div>
  );
}

export default App;
